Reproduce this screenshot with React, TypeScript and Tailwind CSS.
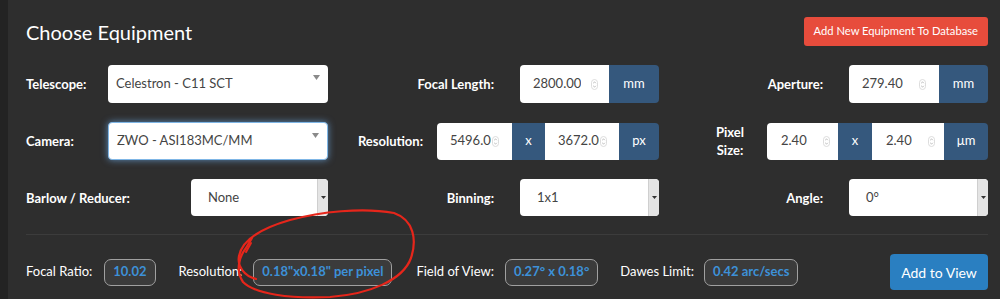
import React from "react";

const Spinner = () => (
  <svg width="7" height="11" viewBox="0 0 7 11" className="shrink-0">
    <rect x="0.5" y="0.5" width="6" height="10" rx="3" fill="none" stroke="#d4d4d4" strokeWidth="0.8" />
    <path d="M2.2 4.2 L3.5 2.9 L4.8 4.2" fill="none" stroke="#a8a8a8" strokeWidth="0.8" />
    <path d="M2.2 6.8 L3.5 8.1 L4.8 6.8" fill="none" stroke="#a8a8a8" strokeWidth="0.8" />
  </svg>
);

const NumInput = ({ value, w, textW, pl = "pl-[13px]", gap = "gap-[10px]", rounded = "" }: { value: string; w: string; textW?: string; pl?: string; gap?: string; rounded?: string }) => (
  <div className={`${w} h-full bg-white flex items-center ${pl} ${gap} ${rounded}`}>
    <div className={`${textW ?? ""} overflow-hidden whitespace-nowrap text-[13px] text-[#444]`}>{value}</div>
    <Spinner />
  </div>
);

const Addon = ({ children, w, rounded = "" }: { children: React.ReactNode; w: string; rounded?: string }) => (
  <div className={`${w} h-full bg-[#35587d] text-white text-[13px] flex items-center justify-center ${rounded}`}>{children}</div>
);

const Label = ({ children, className = "" }: { children: React.ReactNode; className?: string }) => (
  <div className={`text-white font-bold text-[13px] leading-[18px] ${className}`}>{children}</div>
);

const ButtonSelect = ({ value, w }: { value: string; w: string }) => (
  <div className={`${w} h-[37px] bg-white rounded-[4px] flex overflow-hidden`}>
    <div className="flex-1 flex items-center pl-[17px] text-[13px] text-[#444]">{value}</div>
    <div className="w-[11px] h-full bg-[#e4e4e4] border-l border-[#cfcfcf] flex items-center justify-center">
      <svg width="5" height="3" viewBox="0 0 5 3"><path d="M0 0 L5 0 L2.5 3 Z" fill="#333" /></svg>
    </div>
  </div>
);

const PlainSelect = ({ value, focus }: { value: string; focus?: boolean }) => (
  <div
    className={`w-[220px] h-[38px] bg-white rounded-[4px] flex items-center pl-[8px] pr-[8px] justify-between text-[13px] text-[#444] ${
      focus ? "border border-[#7fb6e6] shadow-[0_0_7px_rgba(110,170,230,0.75)]" : ""
    }`}
  >
    <span>{value}</span>
    <svg width="7" height="5" viewBox="0 0 7 5" className="self-start mt-[10px]"><path d="M0 0 L7 0 L3.5 5 Z" fill="#8a8a8a" /></svg>
  </div>
);

const Badge = ({ children }: { children: React.ReactNode }) => (
  <div className="h-[27px] px-[8px] rounded-[7px] border-[1.5px] border-[#a0a0a0] bg-[#3b3b3b] text-[#3d91d8] font-bold text-[13px] flex items-center">{children}</div>
);

export default function App() {
  return (
    <div className="w-[1000px] h-[299px] flex overflow-hidden relative" style={{ fontFamily: "Lato, 'Open Sans', sans-serif" }}>
      <div className="w-[8px] h-full bg-[#232323]" />
      <div className="flex-1 bg-[#2e2e2e] pl-[18px] pr-[12px] flex flex-col">
        <div className="flex items-center justify-between pt-[17px] h-[46px]">
          <div className="text-white text-[20px] leading-none">Choose Equipment</div>
          <div className="h-[29px] px-[10px] bg-[#e74c3c] rounded-[3px] text-white text-[11.2px] flex items-center">Add New Equipment To Database</div>
        </div>

        <div className="grid grid-cols-[302px_331px_329px] h-[38px] mt-[19px]">
          <div className="flex items-center justify-between">
            <Label>Telescope:</Label>
            <PlainSelect value="Celestron - C11 SCT" />
          </div>
          <div className="flex items-center justify-end gap-[26px]">
            <Label>Focal Length:</Label>
            <div className="flex h-[38px]">
              <NumInput value="2800.00" w="w-[89px]" rounded="rounded-l-[4px]" />
              <Addon w="w-[50px]" rounded="rounded-r-[4px]">mm</Addon>
            </div>
          </div>
          <div className="flex items-center justify-end gap-[26px]">
            <Label>Aperture:</Label>
            <div className="flex h-[38px]">
              <NumInput value="279.40" w="w-[90px]" gap="gap-[16px]" rounded="rounded-l-[4px]" />
              <Addon w="w-[49px]" rounded="rounded-r-[4px]">mm</Addon>
            </div>
          </div>
        </div>

        <div className="grid grid-cols-[302px_331px_329px] h-[38px] mt-[19px]">
          <div className="flex items-center justify-between">
            <Label>Camera:</Label>
            <PlainSelect value="ZWO - ASI183MC/MM" focus />
          </div>
          <div className="flex items-center justify-end gap-[14px]">
            <Label>Resolution:</Label>
            <div className="flex h-[37px]">
              <NumInput value="5496.00" w="w-[75px]" textW="w-[41px]" gap="gap-[1px]" rounded="rounded-l-[4px]" />
              <Addon w="w-[33px]">x</Addon>
              <NumInput value="3672.00" w="w-[74px]" textW="w-[41px]" pl="pl-[13px]" gap="gap-[1px]" />
              <Addon w="w-[40px]" rounded="rounded-r-[4px]">px</Addon>
            </div>
          </div>
          <div className="flex items-center justify-end gap-[23px]">
            <Label className="text-center">Pixel<br />Size:</Label>
            <div className="flex h-[37px]">
              <NumInput value="2.40" w="w-[71px]" pl="pl-[14px]" gap="gap-[16px]" rounded="rounded-l-[4px]" />
              <Addon w="w-[34px]">x</Addon>
              <NumInput value="2.40" w="w-[72px]" pl="pl-[14px]" gap="gap-[16px]" />
              <Addon w="w-[44px]" rounded="rounded-r-[4px]">µm</Addon>
            </div>
          </div>
        </div>

        <div className="grid grid-cols-[302px_331px_329px] h-[37px] mt-[19px]">
          <div className="flex items-center justify-between">
            <Label>Barlow / Reducer:</Label>
            <ButtonSelect value="None" w="w-[137px]" />
          </div>
          <div className="flex items-center justify-end gap-[26px]">
            <Label>Binning:</Label>
            <ButtonSelect value="1x1" w="w-[139px]" />
          </div>
          <div className="flex items-center justify-end gap-[26px]">
            <Label>Angle:</Label>
            <ButtonSelect value="0°" w="w-[139px]" />
          </div>
        </div>

        <div className="h-px bg-[#3c3c3c] mt-[18px]" />

        <div className="flex items-center mt-[19px] h-[36px] text-white text-[13px]">
          <span>Focal Ratio:</span>
          <div className="ml-[12px]"><Badge>10.02</Badge></div>
          <span className="ml-[23px]">Resolution:</span>
          <div className="ml-[11px]"><Badge>0.18"x0.18" per pixel</Badge></div>
          <span className="ml-[24px]">Field of View:</span>
          <div className="ml-[11px]"><Badge>0.27° x 0.18°</Badge></div>
          <span className="ml-[22px]">Dawes Limit:</span>
          <div className="ml-[10px]"><Badge>0.42 arc/secs</Badge></div>
          <div className="ml-auto h-[36px] w-[98px] bg-[#2a7fc1] rounded-[4px] text-white text-[14px] flex items-center justify-center">Add to View</div>
        </div>
      </div>

      <svg className="absolute left-0 top-0 pointer-events-none" width="1000" height="299" viewBox="0 0 1000 299">
        <path
          d="M256 279 C 244 276, 237 266, 239 256 C 242 240, 262 228, 290 220 C 320 212, 362 207, 394 213 C 414 220, 417 240, 411 258 C 403 280, 370 294, 330 297 C 290 299, 255 294, 243 282 C 236 272, 238 258, 246 248 L 252 238"
          fill="none"
          stroke="#e6261b"
          strokeWidth="2.2"
          strokeLinecap="round"
        />
        <path d="M246 252 L 251 243" fill="none" stroke="#e6261b" strokeWidth="2" strokeLinecap="round" />
      </svg>
    </div>
  );
}
